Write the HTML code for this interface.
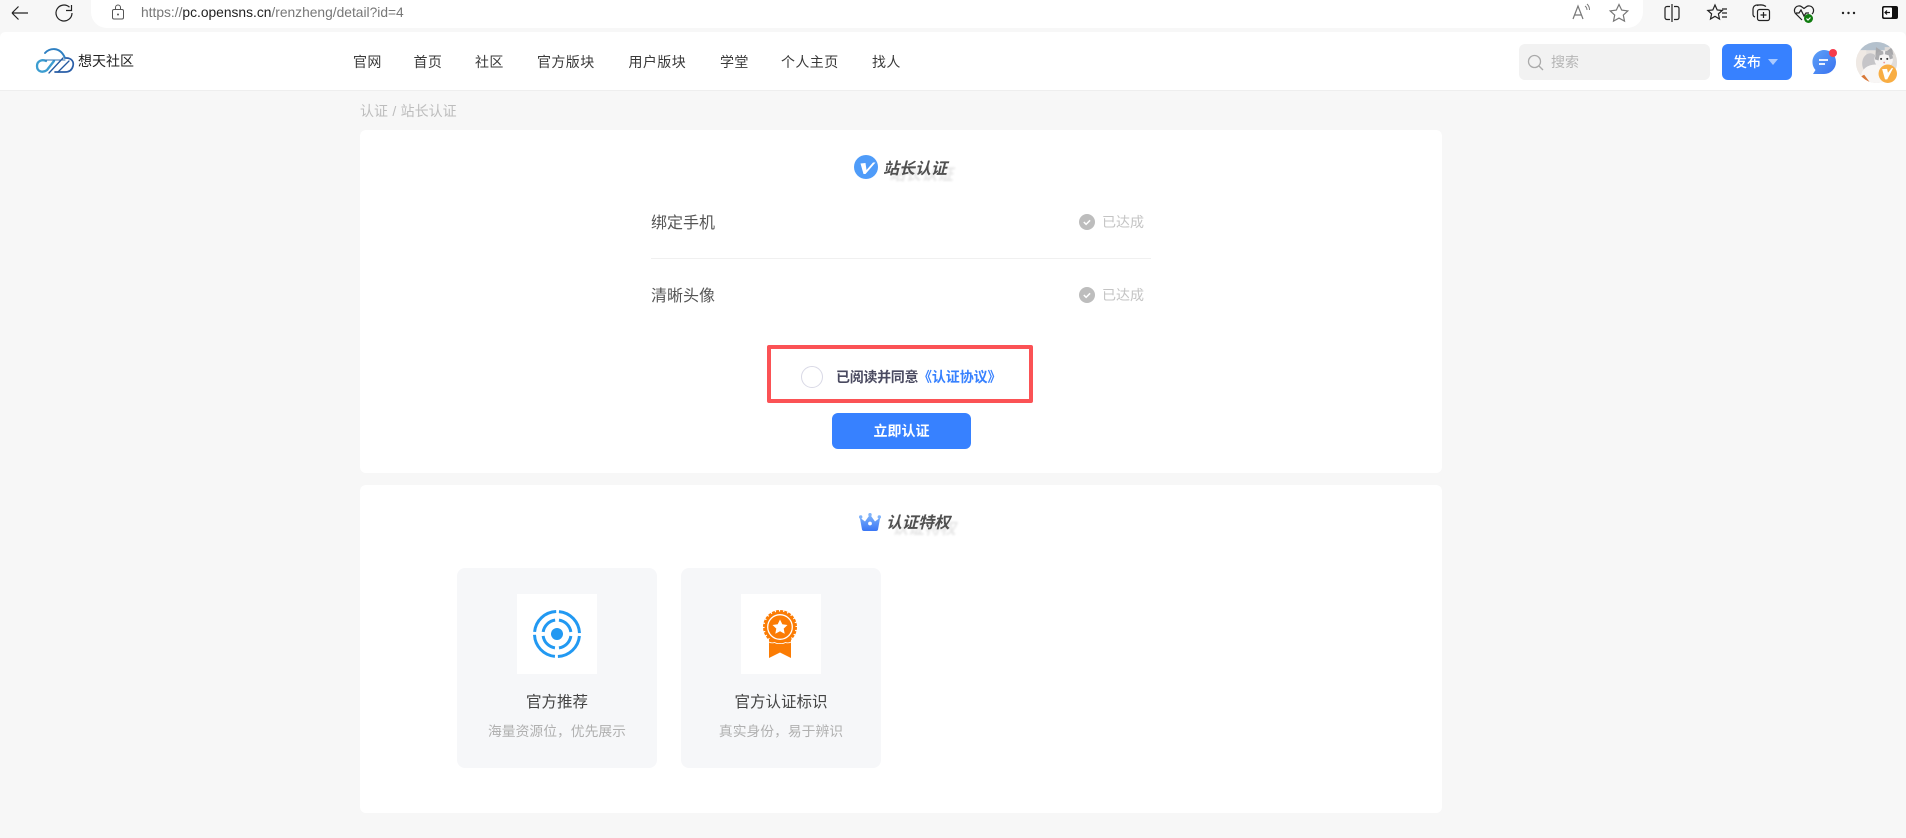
<!DOCTYPE html>
<html lang="zh"><head><meta charset="utf-8"><title>站长认证</title>
<style>
*{box-sizing:border-box;margin:0;padding:0}
html,body{width:1906px;height:838px;overflow:hidden;background:#f7f7f7;font-family:"Liberation Sans","Noto Sans CJK SC",sans-serif;color:#333}
.a{position:absolute;white-space:nowrap}
.t{line-height:20px;transform:translateY(-10px)}
svg{position:absolute;overflow:visible}
.card{position:absolute;background:#fff;border-radius:6px;left:360px;width:1082px}
.tile{position:absolute;top:568px;width:200px;height:200px;background:#f6f7f9;border-radius:8px}
.box{position:absolute;top:594px;width:80px;height:80px;background:#fff}
.h{font-size:16px;font-weight:700;font-style:italic;color:#505050;text-shadow:6px 6px 2px #e6e6e6}
.n{font-size:14px;color:#3a3a3a;top:62px;letter-spacing:.4px}
</style></head><body>

<!-- browser chrome -->
<div class="a" style="left:91px;top:-10px;width:1552px;height:38px;background:#fff;border-radius:0 0 16px 16px/0 0 16px 16px"></div>
<svg style="left:0;top:0" width="1906" height="32" fill="none" stroke="#222" stroke-width="1.2">
<path d="M12 13H28M12 13l6.500-6.500M12 13l6.500 6.500"/>
<path d="M69.500 7.200A8 8 0 1 0 72 13M71.500 5v5.500H66"/>
<g stroke="#555" stroke-width="1"><rect x="112.500" y="9.500" width="11" height="9.500" rx="1.500"/><path d="M115.500 9.500V7.500a2.500 2.500 0 0 1 5 0v2"/></g><circle cx="118" cy="14.500" r="1" fill="#555" stroke="none"/>
<g stroke="#777"><path d="M1573 19l5-13 5 13M1575 15h6"/><path d="M1585 6a5 5 0 0 1 2 4M1587 4a8 8 0 0 1 2.500 6" stroke-width="1"/><path d="M1619 4.500l2.700 5.600 6.100.8-4.500 4.200 1.200 6-5.500-3-5.500 3 1.200-6-4.500-4.200 6.100-.8z"/></g>
<path d="M1670 6.500h-3a2 2 0 0 0-2 2v9a2 2 0 0 0 2 2h3M1674 6.500h3a2 2 0 0 1 2 2v9a2 2 0 0 1-2 2h-3M1672 4v18"/>
<path d="M1715 5l2.200 5 5 .5-3.800 3.400 1.100 5.100-4.500-2.700-4.500 2.700 1.100-5.100-3.800-3.400 5-.5zM1722 9h5M1722 13h5M1722 17h5"/>
<path d="M1762 5h-5a4 4 0 0 0-4 4v5a3 3 0 0 0 2 3M1757 5.500c3-1 6-1 9 1"/><rect x="1757.500" y="9.500" width="12" height="11" rx="2"/><path d="M1763.500 12v6M1760.500 15h6"/>
<path d="M1802 20l-6-6a4.500 4.500 0 0 1 6-7l2 1.500 2-1.500a4.500 4.500 0 0 1 6 7M1796 13h3l2-3 3 6 2-3h3"/>
<circle cx="1808.500" cy="18.500" r="4.500" fill="#107c10" stroke="none"/><path d="M1806.500 18.500l1.500 1.500 2.500-2.500" stroke="#fff"/>
<g fill="#222" stroke="none"><circle cx="1843" cy="13" r="1.200"/><circle cx="1848.500" cy="13" r="1.200"/><circle cx="1854" cy="13" r="1.200"/></g>
<rect x="1882" y="6" width="16" height="13" rx="2" fill="#111" stroke="none"/><rect x="1883.500" y="7.500" width="8.500" height="10" rx="1" fill="#fff" stroke="none"/><path d="M1890 12.500h-5M1887 10.500l-2 2 2 2" stroke="#111"/>
</svg>
<div class="a t" style="left:141px;top:12.500px;font-size:13.800px;color:#777">https://<span style="color:#222">pc.opensns.cn</span>/renzheng/detail?id=4</div>

<!-- header -->
<div class="a" style="left:0;top:32px;width:1906px;height:59px;background:#fff;border-bottom:1px solid #eee;border-radius:5px 5px 0 0"></div>
<svg style="left:36px;top:47px" width="38" height="29" viewBox="0 0 38 29" fill="none" stroke-linecap="round">
<path d="M9 6C13 1 24-1 29 11" stroke="#2f80c2" stroke-width="1.900"/>
<path d="M30 11c6 0 8 4 7 8-1 4-4 6-8 6H19" stroke="#2a5ea8" stroke-width="1.700"/>
<path d="M10 14C6 12 1 14 1 19c0 6 6 7 10 4l7-9" stroke="#3c9dd0" stroke-width="2.300"/>
<path d="M9 13H29" stroke="#2f70b0" stroke-width="1.100"/>
<path d="M13 26L27 11M22 25L33 14" stroke="#23599f" stroke-width="1.300"/>
</svg>
<div class="a t" style="left:78px;top:61px;font-size:14px;font-weight:400;color:#222">想天社区</div>
<div class="a t n" style="left:353px">官网</div>
<div class="a t n" style="left:413.500px">首页</div>
<div class="a t n" style="left:475px">社区</div>
<div class="a t n" style="left:537px">官方版块</div>
<div class="a t n" style="left:628.500px">用户版块</div>
<div class="a t n" style="left:720px">学堂</div>
<div class="a t n" style="left:781px">个人主页</div>
<div class="a t n" style="left:872px">找人</div>

<div class="a" style="left:1519px;top:44px;width:191px;height:36px;background:#f2f2f2;border-radius:6px"></div>
<svg style="left:1527px;top:54px" width="18" height="18" fill="none" stroke="#aaa" stroke-width="1.300"><circle cx="7.500" cy="7.500" r="6"/><path d="M12 12l4 4"/></svg>
<div class="a t" style="left:1551px;top:62px;font-size:14px;color:#b5b5b5">搜索</div>
<div class="a" style="left:1722px;top:44px;width:70px;height:36px;background:#3781ff;border-radius:6px"></div>
<div class="a t" style="left:1733px;top:62px;font-size:14px;font-weight:500;color:#fff">发布</div>
<svg style="left:1768px;top:59px" width="10" height="7"><path d="M0 0H10L5 6z" fill="#a9c9ff"/></svg>
<svg style="left:1811px;top:48px" width="26" height="28" viewBox="0 0 26 28">
<defs><linearGradient id="g" x1="0" x2="1" y1="0" y2="1"><stop offset="0" stop-color="#5da0f7"/><stop offset="1" stop-color="#3a72f0"/></linearGradient></defs>
<path d="M13 2a12 12 0 0 1 0 24H2l2.500-4A12 12 0 0 1 13 2z" fill="url(#g)"/>
<path d="M8 12h9M8 16h6" stroke="#fff" stroke-width="1.800"/>
<circle cx="22" cy="5" r="4" fill="#f53b4c"/></svg>
<svg style="left:1856px;top:42px" width="41" height="41" viewBox="0 0 40 40">
<defs><clipPath id="c"><circle cx="20" cy="20" r="20"/></clipPath></defs>
<g clip-path="url(#c)"><rect width="40" height="40" fill="#e6e2df"/><rect width="40" height="8" fill="#b4c1cd"/><rect x="0" y="8" width="10" height="26" fill="#efe9e4"/><rect x="28" y="5" width="12" height="22" fill="#e0dcd9"/>
<ellipse cx="14" cy="21" rx="8" ry="10" fill="#c6c5c8"/><ellipse cx="19" cy="33" rx="14" ry="11" fill="#f8f6f5"/>
<ellipse cx="27" cy="17" rx="9" ry="8.500" fill="#f6f4f4"/><path d="M19 13l.5-8 6 4zM30 9l5-4 1.500 8z" fill="#a8a8ab"/><path d="M18.500 17c0-7 5-9 8-8l.3 3-3.800 1-1 5zM36 16c0-5-4-8-7.500-7l-.3 3 3.800 1 1 4z" fill="#adadb0"/><circle cx="24.500" cy="16.500" r="1" fill="#333"/><circle cx="30.500" cy="16.500" r="1" fill="#333"/><circle cx="27.500" cy="20" r=".9" fill="#e99"/>
<path d="M0 36l8-4 6 8H0z" fill="#d87838"/></g>
<circle cx="31" cy="31" r="9" fill="#f8ad43"/><path d="M25.500 26.500l4.800-.3.900 3.800 3.600-4.500h1.400L30.500 36.500h-2.200z" fill="#fff"/></svg>

<div class="a t" style="left:360px;top:111px;font-size:14px;color:#bdbdbd;word-spacing:.5px">认证 / 站长认证</div>

<!-- card 1 -->
<div class="card" style="top:130px;height:343px"></div>
<svg style="left:854px;top:155px" width="24" height="24"><circle cx="12" cy="12" r="12" fill="#4f9cf9"/><path d="M6.500 8.500L11.500 8l1 7 6.500-7.500h2.500L11.500 19h-2z" fill="#fff"/></svg>
<div class="a t h" style="left:883px;top:170px">站长认证</div>
<div class="a t" style="left:651px;top:224px;font-size:16px;color:#555">绑定手机</div>
<div class="a" style="left:651px;top:258px;width:500px;height:1px;background:#f0f0f0"></div>
<div class="a t" style="left:651px;top:297px;font-size:16px;color:#555">清晰头像</div>
<svg style="left:1079px;top:214px" width="16" height="16"><circle cx="8" cy="8" r="8" fill="#bdbdbd"/><path d="M4.800 8l2.300 2.300 4-4" stroke="#fff" stroke-width="1.500" fill="none"/></svg>
<svg style="left:1079px;top:287px" width="16" height="16"><circle cx="8" cy="8" r="8" fill="#bdbdbd"/><path d="M4.800 8l2.300 2.300 4-4" stroke="#fff" stroke-width="1.500" fill="none"/></svg>
<div class="a t" style="left:1102px;top:222px;font-size:14px;color:#c4c4c4">已达成</div>
<div class="a t" style="left:1102px;top:295px;font-size:14px;color:#c4c4c4">已达成</div>

<div class="a" style="left:767px;top:345px;width:266px;height:58px;border:4px solid #fb5255;border-radius:2px"></div>
<div class="a" style="left:801px;top:366px;width:22px;height:22px;border:1px solid #d9d9e6;border-radius:50%;background:#fff"></div>
<div class="a t" style="left:836px;top:377px;font-size:14px;font-weight:700;color:#4a4a60;letter-spacing:-.3px">已阅读并同意</div>
<div class="a t" style="left:918px;top:377px;font-size:14px;font-weight:700;color:#3781ff;letter-spacing:-.1px">《认证协议》</div>
<div class="a" style="left:832px;top:413px;width:139px;height:36px;background:#3781ff;border-radius:6px;color:#fff;font-size:14px;font-weight:700;line-height:36px;text-align:center">立即认证</div>

<!-- card 2 -->
<div class="card" style="top:485px;height:328px"></div>
<svg style="left:859px;top:513px" width="22" height="18" viewBox="0 0 22 18">
<defs><linearGradient id="k" x1="0" x2="0" y1="0" y2="1"><stop offset="0" stop-color="#7fb4fb"/><stop offset="1" stop-color="#3a76f5"/></linearGradient></defs>
<path d="M3 16.500L.8 4.500 6 8.500 11 1.500 16 8.500 21.200 4.500 19 16.500q-.3 1.500-2 1.500H5q-1.700 0-2-1.500z" fill="url(#k)"/><circle cx="1.700" cy="4" r="1.700" fill="#80b3fa"/><circle cx="20.300" cy="4" r="1.700" fill="#80b3fa"/><circle cx="11" cy="1.700" r="1.700" fill="#80b3fa"/><circle cx="11" cy="10.500" r="1.900" fill="#fff"/></svg>
<div class="a t h" style="left:886px;top:524px">认证特权</div>

<div class="tile" style="left:457px"></div>
<div class="box" style="left:517px"></div>
<svg style="left:533px;top:610px" width="48" height="48" viewBox="0 0 48 48" fill="none" stroke="#2299f2">
<circle cx="24" cy="24" r="22.500" stroke-width="3" stroke-dasharray="32.340 3" transform="rotate(-85 24 24)"/>
<circle cx="24" cy="24" r="14" stroke-width="3" stroke-dasharray="18 4" transform="rotate(-82 24 24)"/>
<circle cx="24" cy="24" r="6" fill="#2299f2" stroke="none"/></svg>
<div class="a" style="left:457px;top:693px;width:200px;text-align:center;font-size:15.500px;line-height:20px;color:#444">官方推荐</div>
<div class="a" style="left:457px;top:722px;width:200px;text-align:center;font-size:13.800px;line-height:20px;color:#b0b0b0">海量资源位，优先展示</div>

<div class="tile" style="left:681px"></div>
<div class="box" style="left:741px"></div>
<svg style="left:762px;top:609px" width="36" height="50" viewBox="0 0 36 50">
<path d="M7 30H29V49L18 43.500 7 49z" fill="#fb7c04"/>
<circle cx="18" cy="18" r="15.500" fill="#fb7c04"/>
<circle cx="18" cy="18" r="16" fill="none" stroke="#fb7c04" stroke-width="2" stroke-dasharray="3 1.190"/>
<circle cx="18" cy="18" r="12.300" fill="none" stroke="#fff" stroke-width="1.300"/>
<path d="M18 10.500l2.300 4.800 5.200.7-3.800 3.600 1 5.200-4.700-2.500-4.700 2.500 1-5.200-3.800-3.600 5.200-.7z" fill="#fff"/>
<path d="M7 33q2.500 1.500 5.500.5 2.500 1.500 5.500 1 3 .5 5.500-1 3 1 5.500-.5" stroke="#fff" stroke-width=".8" fill="none"/></svg>
<div class="a" style="left:681px;top:693px;width:200px;text-align:center;font-size:15.500px;line-height:20px;color:#444">官方认证标识</div>
<div class="a" style="left:681px;top:722px;width:200px;text-align:center;font-size:13.800px;line-height:20px;color:#b0b0b0">真实身份，易于辨识</div>
</body></html>
